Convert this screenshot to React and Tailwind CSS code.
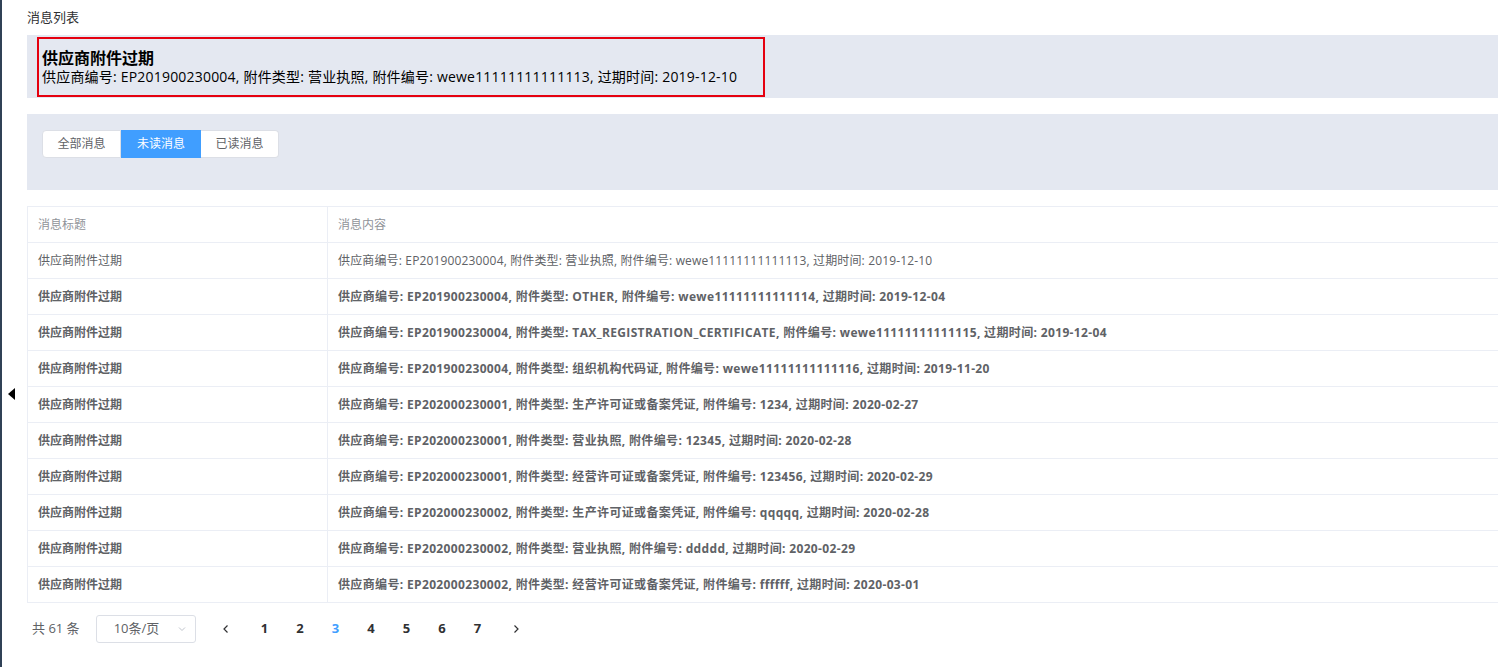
import React from "react";

const rows = [
  { c: "供应商编号: EP201900230004, 附件类型: 营业执照, 附件编号: wewe11111111111113, 过期时间: 2019-12-10", read: true },
  { c: "供应商编号: EP201900230004, 附件类型: OTHER, 附件编号: wewe11111111111114, 过期时间: 2019-12-04" },
  { c: "供应商编号: EP201900230004, 附件类型: TAX_REGISTRATION_CERTIFICATE, 附件编号: wewe11111111111115, 过期时间: 2019-12-04" },
  { c: "供应商编号: EP201900230004, 附件类型: 组织机构代码证, 附件编号: wewe11111111111116, 过期时间: 2019-11-20" },
  { c: "供应商编号: EP202000230001, 附件类型: 生产许可证或备案凭证, 附件编号: 1234, 过期时间: 2020-02-27" },
  { c: "供应商编号: EP202000230001, 附件类型: 营业执照, 附件编号: 12345, 过期时间: 2020-02-28" },
  { c: "供应商编号: EP202000230001, 附件类型: 经营许可证或备案凭证, 附件编号: 123456, 过期时间: 2020-02-29" },
  { c: "供应商编号: EP202000230002, 附件类型: 生产许可证或备案凭证, 附件编号: qqqqq, 过期时间: 2020-02-28" },
  { c: "供应商编号: EP202000230002, 附件类型: 营业执照, 附件编号: ddddd, 过期时间: 2020-02-29" },
  { c: "供应商编号: EP202000230002, 附件类型: 经营许可证或备案凭证, 附件编号: ffffff, 过期时间: 2020-03-01" },
];

const font = { fontFamily: '"Segoe UI", "Open Sans", "Noto Sans CJK SC", sans-serif' };

export default function App() {
  return (
    <div className="relative flex min-h-[667px] w-[1498px] overflow-hidden bg-white text-[#303133]" style={font}>
      <div className="w-[2px] shrink-0 bg-[#304156]" />
      <div className="absolute left-[8px] top-[388px] h-0 w-0 border-y-[6px] border-r-[7px] border-y-transparent border-r-black" />
      <div className="flex min-w-0 flex-1 flex-col pl-[25px]">
        <div className="flex h-[35px] items-center pb-[1px] text-[13px] leading-none text-[#303133]">消息列表</div>
        <div className="h-[63px] bg-[#e4e8f1] pl-[10px] pt-[2px]">
          <div className="h-[60px] w-[728px] border-2 border-[#e5000f] pl-[3px] pt-[9px]">
            <div className="text-[16px] font-bold leading-[20px] text-black">供应商附件过期</div>
            <div className="text-[14px] leading-[17px] tracking-[0.2px] text-black">供应商编号: EP201900230004, 附件类型: 营业执照, 附件编号: wewe11111111111113, 过期时间: 2019-12-10</div>
          </div>
        </div>
        <div className="mt-[16px] h-[76px] bg-[#e4e8f1] pl-[15px] pt-[16px]">
          <div className="flex h-[28px] w-fit text-[12px]">
            <div className="flex w-[79px] items-center justify-center rounded-l-[4px] border border-[#dcdfe6] bg-white text-[#606266]">全部消息</div>
            <div className="flex w-[80px] items-center justify-center border border-[#409eff] bg-[#409eff] text-white">未读消息</div>
            <div className="flex w-[78px] items-center justify-center rounded-r-[4px] border border-l-0 border-[#dcdfe6] bg-white text-[#606266]">已读消息</div>
          </div>
        </div>
        <div className="mt-[16px] border-l border-t border-[#ebeef5] text-[12px]">
          <div className="flex h-[36px] border-b border-[#ebeef5] text-[#909399]">
            <div className="flex w-[300px] shrink-0 items-center border-r border-[#ebeef5] pl-[10px]">消息标题</div>
            <div className="flex flex-1 items-center pl-[10px]">消息内容</div>
          </div>
          {rows.map((r, i) => (
            <div key={i} className={"flex h-[36px] border-b border-[#ebeef5] text-[#606266] " + (r.read ? "font-normal" : "font-bold")}>
              <div className="flex w-[300px] shrink-0 items-center border-r border-[#ebeef5] pl-[10px]">供应商附件过期</div>
              <div className={"flex flex-1 items-center whitespace-nowrap pl-[10px] " + (r.read ? "tracking-[0.15px]" : "tracking-[0.35px]")}>{r.c}</div>
            </div>
          ))}
        </div>
        <div className="mt-[12px] flex h-[28px] items-center text-[13px] text-[#606266]">
          <span className="ml-[5px] mr-[16px]">共 61 条</span>
          <div className="flex h-[28px] w-[100px] items-center justify-between rounded-[3px] border border-[#dcdfe6] pl-[17px] pr-[8px]">
            <span>10条/页</span>
            <svg width="10" height="10" viewBox="0 0 10 10" fill="none" stroke="#c0c4cc" strokeWidth="1"><path d="M2 3.5 L5 6.5 L8 3.5" /></svg>
          </div>
          <div className="ml-[18px] flex items-center font-bold text-[#303133]">
            <span className="mr-[8px] flex w-[25px] justify-center">
              <svg width="10" height="10" viewBox="0 0 10 10" fill="none" stroke="#303133" strokeWidth="1.2"><path d="M6.5 1.5 L3 5 L6.5 8.5" /></svg>
            </span>
            {["1", "2", "3", "4", "5", "6", "7"].map((n) => (
              <span key={n} className={"flex w-[35.5px] justify-center " + (n === "3" ? "text-[#409eff]" : "")}>{n}</span>
            ))}
            <span className="ml-[11px] flex w-[20px] justify-center">
              <svg width="10" height="10" viewBox="0 0 10 10" fill="none" stroke="#303133" strokeWidth="1.2"><path d="M3.5 1.5 L7 5 L3.5 8.5" /></svg>
            </span>
          </div>
        </div>
      </div>
    </div>
  );
}
